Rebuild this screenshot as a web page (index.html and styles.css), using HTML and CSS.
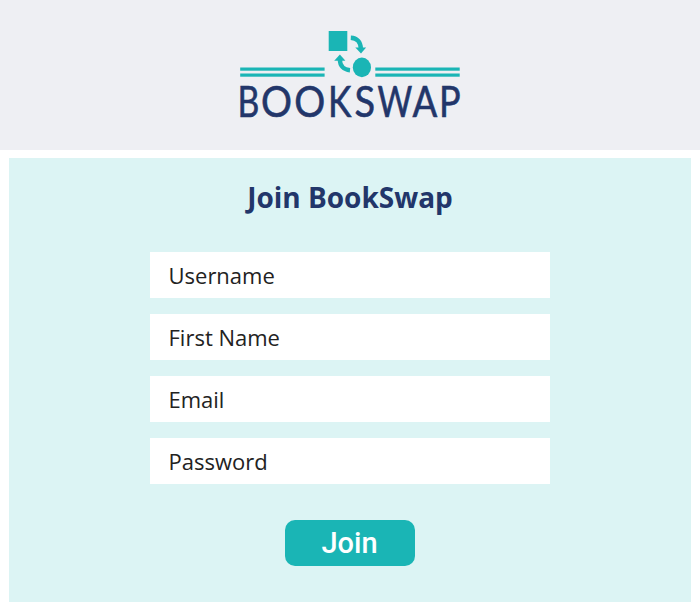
FILE: index.html
```html
<!DOCTYPE html>
<html lang="en">
<head>
<meta charset="utf-8">
<title>BookSwap</title>
<link rel="stylesheet" href="styles.css">
</head>
<body>
<header class="header">
  <svg class="logo" viewBox="230 28 240 100" role="img" aria-label="BookSwap">
    <g class="mark">
      <rect x="328.7" y="31" width="18.6" height="20"/>
      <ellipse cx="361.9" cy="67.4" rx="9.1" ry="9.8"/>
      <path d="M355.3 47.6H366.1L361 53.6Z"/>
      <path d="M334.2 60.8L339.9 54.4L345.4 60.8Z"/>
      <rect x="240.2" y="67.5" width="84.4" height="3.2"/>
      <rect x="240.2" y="73.5" width="84.4" height="3.2"/>
      <rect x="375.3" y="67.5" width="84.4" height="3.2"/>
      <rect x="375.3" y="73.5" width="84.4" height="3.2"/>
    </g>
    <path class="arrow" d="M350.8 37.7C357 38 360.6 42 360.8 48.4M350 70.2C343.6 69.6 339.9 65.8 339.9 59.8"/>
    <text class="wordmark" y="116.5"><tspan x="237.4" textLength="21.8" lengthAdjust="spacingAndGlyphs">B</tspan><tspan x="261" textLength="31" lengthAdjust="spacingAndGlyphs">O</tspan><tspan x="294.2" textLength="31" lengthAdjust="spacingAndGlyphs">O</tspan><tspan x="327.9" textLength="23.4" lengthAdjust="spacingAndGlyphs">K</tspan><tspan x="354.5" textLength="20.6" lengthAdjust="spacingAndGlyphs">S</tspan><tspan x="377.4" textLength="34.8" lengthAdjust="spacingAndGlyphs">W</tspan><tspan x="412.4" textLength="24.8" lengthAdjust="spacingAndGlyphs">A</tspan><tspan x="439" textLength="21.6" lengthAdjust="spacingAndGlyphs">P</tspan></text>
  </svg>
</header>
<main class="panel">
  <h1 class="title">Join BookSwap</h1>
  <form class="form">
    <input class="field" type="text" placeholder="Username" aria-label="Username">
    <input class="field" type="text" placeholder="First Name" aria-label="First Name">
    <input class="field" type="email" placeholder="Email" aria-label="Email">
    <input class="field" type="password" placeholder="Password" aria-label="Password">
    <button class="join" type="button">Join</button>
  </form>
</main>
</body>
</html>
```
FILE: styles.css
```css
* { box-sizing: border-box; }
body {
  margin: 0;
  background: #fff;
  font-family: "Open Sans", sans-serif;
}
.header {
  height: 150px;
  padding-top: 28px;
  background: #eeeff3;
  display: flex;
  justify-content: center;
  align-items: flex-start;
}
.logo { width: 240px; height: 100px; overflow: visible; }
.mark { fill: #1ab5b5; }
.arrow { fill: none; stroke: #1ab5b5; stroke-width: 4.4; }
.wordmark {
  font-family: Lato, sans-serif;
  font-size: 42px;
  fill: #22366a;
  stroke: #22366a;
  stroke-width: 0.6;
}
.panel {
  height: 444px;
  margin: 8px 9px 0;
  padding-top: 19px;
  background: #dcf4f4;
}
.title {
  margin: 0;
  font-size: 28px;
  line-height: 40px;
  font-weight: 700;
  text-align: center;
  color: #22366a;
}
.form {
  width: 400px;
  margin: 35px auto 0;
  display: flex;
  flex-direction: column;
  gap: 16px;
}
.field {
  height: 46px;
  padding: 0 16px 0 18.5px;
  border: 0;
  background: #fff;
  font: 400 22px "Open Sans", sans-serif;
  color: #222;
}
.field::placeholder { color: #222; opacity: 1; }
.join {
  width: 130px;
  height: 46px;
  margin: 20px auto 0;
  padding: 0 1px 0 0;
  border: 0;
  border-radius: 10px;
  background: #1ab5b5;
  color: #fff;
  font: 500 29px Roboto, sans-serif;
}
```
